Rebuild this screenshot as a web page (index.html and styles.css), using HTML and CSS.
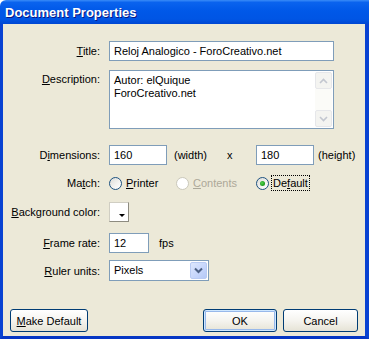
FILE: index.html
```html
<!DOCTYPE html>
<html lang="en">
<head>
  <meta charset="UTF-8" />
  <title>Document Properties</title>
  <link rel="stylesheet" href="styles.css">
</head>
<body>
  <div class="window">
    <div class="titlebar">Document Properties</div>

    <div class="body">
      <div class="row row-title">
        <label class="label"><u>T</u>itle:</label>
        <div class="field title-field">Reloj Analogico - ForoCreativo.net</div>
      </div>

      <div class="row row-desc">
        <label class="label label-top"><u>D</u>escription:</label>
        <div class="textarea">
          <div class="textarea-text">Autor: elQuique<br>ForoCreativo.net</div>
          <div class="scrollbar">
            <div class="sb-btn">
              <svg width="9" height="6" viewBox="0 0 9 6"><path d="M1 5 L4.5 1.5 L8 5" fill="none" stroke="#c3c7d0" stroke-width="1.6"/></svg>
            </div>
            <div class="sb-track"></div>
            <div class="sb-btn">
              <svg width="9" height="6" viewBox="0 0 9 6"><path d="M1 1 L4.5 4.5 L8 1" fill="none" stroke="#c3c7d0" stroke-width="1.6"/></svg>
            </div>
          </div>
        </div>
      </div>

      <div class="row row-dim">
        <label class="label">D<u>i</u>mensions:</label>
        <div class="inline">
          <div class="field dim-field">160</div>
          <span class="unit unit-width">(width)</span>
          <span class="unit unit-x">x</span>
          <div class="field dim-field">180</div>
          <span class="unit unit-height">(height)</span>
        </div>
      </div>

      <div class="row row-match">
        <label class="label">Ma<u>t</u>ch:</label>
        <div class="inline">
          <span class="option opt-printer"><span class="radio"></span><span class="opt-text"><u>P</u>rinter</span></span>
          <span class="option opt-contents disabled"><span class="radio"></span><span class="opt-text"><u>C</u>ontents</span></span>
          <span class="option opt-default"><span class="radio checked"></span><span class="opt-text focus">De<u>f</u>ault</span></span>
        </div>
      </div>

      <div class="row row-bg">
        <label class="label"><u>B</u>ackground color:</label>
        <div class="swatch">
          <span class="swatch-arrow"></span>
        </div>
      </div>

      <div class="row row-fps">
        <label class="label"><u>F</u>rame rate:</label>
        <div class="inline">
          <div class="field fps-field">12</div>
          <span class="unit unit-fps">fps</span>
        </div>
      </div>

      <div class="row row-ruler">
        <label class="label"><u>R</u>uler units:</label>
        <div class="select">
          <span class="select-text">Pixels</span>
          <span class="select-btn">
            <svg width="9" height="7" viewBox="0 0 9 7"><path d="M1 1.5 L4.5 5 L8 1.5" fill="none" stroke="#4d6185" stroke-width="2"/></svg>
          </span>
        </div>
      </div>

      <div class="buttons">
        <button class="btn btn-make"><u>M</u>ake Default</button>
        <div class="btn-group">
          <button class="btn btn-ok">OK</button>
          <button class="btn btn-cancel">Cancel</button>
        </div>
      </div>
    </div>
  </div>
</body>
</html>
```

FILE: styles.css
```css
* {
  margin: 0;
  padding: 0;
  box-sizing: border-box;
}

body {
  font-family: 'Liberation Sans', Arial, sans-serif;
  font-size: 11px;
  color: #000;
  background: #fff;
}

.window {
  width: 369px;
  height: 339px;
  display: flex;
  flex-direction: column;
}

.titlebar {
  height: 24px;
  padding: 5px 0 0 5px;
  color: #fff;
  font-weight: bold;
  font-size: 13px;
  text-shadow: 1px 1px 0 #0a1883;
  background: linear-gradient(to bottom, #3a8cf8 0%, #0a63ee 10%, #0058e8 45%, #0055e4 80%, #0047d2 100%);
  border-top-left-radius: 6px;
}

.body {
  flex: 1;
  background: #ece9d8;
  border-left: 3px solid #0842d2;
  border-right: 4px solid #0842d2;
  border-bottom: 3px solid #0536c4;
  display: flex;
  flex-direction: column;
}

.row {
  display: grid;
  grid-template-columns: 97px 1fr;
  column-gap: 9px;
  align-items: center;
}

.label {
  text-align: right;
  white-space: nowrap;
}

.label-top {
  align-self: start;
  padding-top: 3px;
}

.row-title { margin-top: 17px; }
.row-desc { margin-top: 9px; }
.row-dim { margin-top: 16px; }
.row-match { margin-top: 8px; }
.row-bg { margin-top: 9px; }
.row-fps { margin-top: 11px; }
.row-ruler { margin-top: 7px; }

.field {
  height: 20px;
  background: #fff;
  border: 1px solid #7f9db9;
  padding: 3px 0 0 4px;
  white-space: nowrap;
}

.title-field { width: 225px; }
.dim-field { width: 58px; }
.fps-field { width: 40px; }

.textarea {
  width: 225px;
  height: 59px;
  background: #fff;
  border: 1px solid #7f9db9;
  display: flex;
}

.textarea-text {
  flex: 1;
  padding: 3px 0 0 4px;
  line-height: 13px;
}

.scrollbar {
  width: 18px;
  display: flex;
  flex-direction: column;
  padding: 1px 1px 1px 0;
}

.sb-btn {
  height: 17px;
  border: 1px solid #e6e7ea;
  border-radius: 2px;
  background: #f4f4f1;
  display: flex;
  align-items: center;
  justify-content: center;
}

.sb-track {
  flex: 1;
  background: #fbfbf8;
}

.inline {
  display: flex;
  align-items: center;
}

.unit { white-space: nowrap; }
.unit-width { width: 60px; padding-left: 7px; }
.unit-x { width: 29px; }
.unit-height { padding-left: 4px; }
.unit-fps { padding-left: 10px; }

.option {
  display: flex;
  align-items: center;
  height: 20px;
}

.opt-printer { width: 67px; }
.opt-contents { width: 80px; }

.radio {
  width: 13px;
  height: 13px;
  border-radius: 50%;
  border: 1px solid #1c5180;
  background: linear-gradient(135deg, #dcdcd7 0%, #f4f4f2 60%, #fff 100%);
  margin-right: 3px;
  position: relative;
}

.radio.checked::after {
  content: "";
  position: absolute;
  left: 3px;
  top: 3px;
  width: 5px;
  height: 5px;
  border-radius: 50%;
  background: radial-gradient(circle at 40% 40%, #55d451 0%, #21a121 60%, #1a8a1a 100%);
}

.disabled { color: #aca899; }

.disabled .radio {
  border-color: #cac8bb;
  background: #fff;
}

.opt-text {
  padding: 1px 1px;
}

.focus {
  border: 1px dotted #000;
  margin-left: -1px;
}

.swatch {
  width: 20px;
  height: 20px;
  background: #fff;
  border: 1px solid;
  border-color: #d0cec3 #8d8b80 #8d8b80 #d0cec3;
  box-shadow: inset 1px 1px 0 #fff;
  position: relative;
}

.swatch-arrow {
  position: absolute;
  right: 3px;
  bottom: 4px;
  width: 0;
  height: 0;
  border-left: 3px solid transparent;
  border-right: 3px solid transparent;
  border-top: 3px solid #000;
}

.select {
  width: 100px;
  height: 21px;
  background: #fff;
  border: 1px solid #7f9db9;
  display: flex;
  align-items: stretch;
}

.select-text {
  flex: 1;
  padding: 3px 0 0 4px;
}

.select-btn {
  width: 17px;
  margin: 1px;
  border: 1px solid #b9cbf3;
  border-radius: 2px;
  background: linear-gradient(135deg, #dde7fd 0%, #c5d5fb 60%, #b5c9f7 100%);
  display: flex;
  align-items: center;
  justify-content: center;
}

.buttons {
  margin-top: 28px;
  padding: 0 7px;
  display: flex;
  justify-content: space-between;
}

.btn-group {
  display: flex;
  gap: 6px;
}

.btn {
  height: 23px;
  font-family: 'Liberation Sans', Arial, sans-serif;
  font-size: 11px;
  color: #000;
  border: 1px solid #003c74;
  border-radius: 3px;
  background: linear-gradient(to bottom, #ffffff 0%, #f5f4ef 50%, #e6e3d6 100%);
}

.btn-make { width: 78px; }
.btn-ok {
  width: 74px;
  box-shadow: inset 0 0 0 1px #cee7ff, inset 0 0 0 2px #98b8ea;
}
.btn-cancel { width: 75px; }
```
